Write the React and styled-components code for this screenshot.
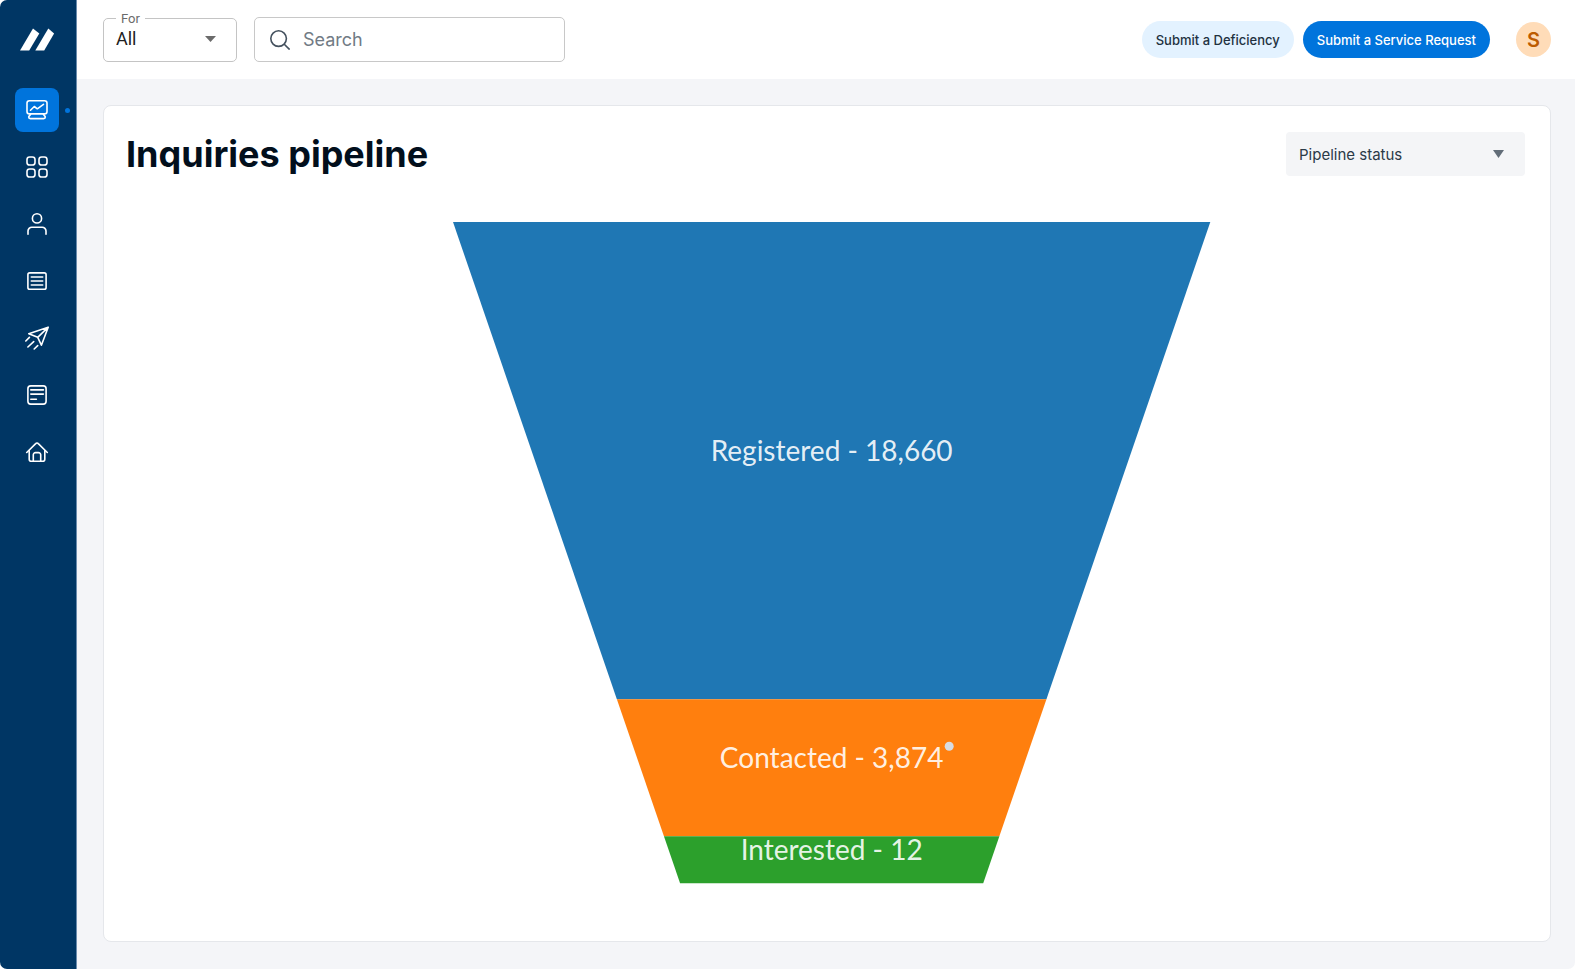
import React, { useState } from "react";
import styled, { createGlobalStyle } from "styled-components";

const GlobalStyle = createGlobalStyle`
  *,
  *::before,
  *::after {
    box-sizing: border-box;
  }

  body {
    margin: 0;
    background: #fff;
    font-family: Inter, "Liberation Sans", sans-serif;
    color: #2b3a47;
  }

  button,
  input,
  select {
    font: inherit;
  }
`;

const Layout = styled.div`
  display: flex;
  min-height: 100vh;
`;

const Sidebar = styled.aside`
  flex: none;
  width: 77px;
  padding: 28px 0 24px 15px;
  background: #003664;
  border-right: 1px solid #6a8bad;
  border-radius: 7px 0 0 7px;
`;

const LogoLink = styled.a`
  display: block;
  width: 44px;
  height: 60px;
`;

const NavList = styled.ul`
  display: flex;
  flex-direction: column;
  gap: 13px;
  margin: 0;
  padding: 0;
  list-style: none;
`;

const NavItem = styled.li`
  display: flex;
  align-items: center;
  gap: 6px;
`;

const NavLink = styled.a`
  display: flex;
  align-items: center;
  justify-content: center;
  width: 44px;
  height: 44px;
  border-radius: 8px;
  color: #fff;
  background: ${({ $active }) => ($active ? "#0074dc" : "transparent")};
`;

const ActiveDot = styled.span`
  width: 5px;
  height: 5px;
  border-radius: 50%;
  background: #0074dc;
`;

const Page = styled.div`
  display: flex;
  flex: 1;
  flex-direction: column;
  min-width: 0;
`;

const Header = styled.header`
  display: flex;
  align-items: center;
  justify-content: space-between;
  gap: 24px;
  height: 79px;
  padding: 0 24px 0 26px;
  background: #fff;
`;

const Filters = styled.div`
  display: flex;
  align-items: center;
  gap: 17px;
`;

const Outlined = styled.fieldset`
  width: 134px;
  height: 51px;
  margin: 0 0 6px;
  padding: 0;
  border: 1px solid #c4c4c4;
  border-radius: 5px;

  legend {
    margin-left: 12px;
    padding: 0 5px;
    font-family: Roboto, sans-serif;
    font-size: 13px;
    line-height: 15px;
    color: #6b6b6b;
  }
`;

const SelectWrap = styled.div`
  position: relative;
  display: flex;
  color: ${({ $arrowColor }) => $arrowColor};
`;

const PlainSelect = styled.select`
  width: 100%;
  height: 26px;
  padding: 0 12px;
  border: 0;
  background: transparent;
  appearance: none;
  font-family: Roboto, sans-serif;
  font-size: 18px;
  line-height: 24px;
  color: #212121;
`;

const FilledSelect = styled.select`
  width: 239px;
  height: 44px;
  padding: 0 13px;
  border: 0;
  border-radius: 4px;
  background: #f4f5f7;
  appearance: none;
  font-size: 15px;
  color: #2b3a47;
`;

const Arrow = styled.svg`
  position: absolute;
  top: 50%;
  right: ${({ $right }) => $right};
  width: 11px;
  height: ${({ $height }) => $height};
  transform: translateY(-50%);
  fill: currentColor;
  pointer-events: none;
`;

const SearchBox = styled.label`
  display: flex;
  align-items: center;
  gap: 13px;
  width: 311px;
  height: 45px;
  padding: 0 15px;
  border: 1px solid #c8c8c8;
  border-radius: 5px;
  color: #44515e;

  svg {
    flex: none;
  }

  input {
    flex: 1;
    min-width: 0;
    padding: 0;
    border: 0;
    outline: 0;
    background: transparent;
    font-size: 18px;
    color: #2b3a47;
  }

  input::placeholder {
    color: #717b85;
    opacity: 1;
  }
`;

const Actions = styled.div`
  display: flex;
  align-items: center;
  gap: 9px;
`;

const PillButton = styled.button`
  height: 37px;
  padding: 0 14px;
  border: 0;
  border-radius: 19px;
  font-size: 13px;
  font-weight: 500;
  white-space: nowrap;
  color: ${({ $primary }) => ($primary ? "#fff" : "#22313f")};
  background: ${({ $primary }) => ($primary ? "#0074dc" : "#e3f2ff")};
`;

const Avatar = styled.button`
  width: 35px;
  height: 35px;
  margin-left: 17px;
  padding: 0;
  border: 0;
  border-radius: 50%;
  background: #ffdcb8;
  font-size: 20px;
  font-weight: 600;
  color: #bd5b00;
`;

const Content = styled.main`
  display: flex;
  flex: 1;
  padding: 26px 24px 27px 26px;
  background: #f4f5f8;
  border-radius: 0 0 7px 0;
`;

const Card = styled.section`
  display: flex;
  flex: 1;
  flex-direction: column;
  min-width: 0;
  padding: 26px 25px 24px 22px;
  background: #fff;
  border: 1px solid #e5e7eb;
  border-radius: 8px;
`;

const CardHeader = styled.div`
  display: flex;
  align-items: center;
  justify-content: space-between;
`;

const Title = styled.h1`
  margin: 0;
  font-size: 36px;
  font-weight: 700;
  line-height: 44px;
  color: #020f1c;
`;

const ChartArea = styled.div`
  display: flex;
  justify-content: center;
  padding: 46px 0 0 12px;
`;

const Funnel = styled.svg`
  width: 54.6%;
  overflow: visible;

  text {
    font-family: Lato, sans-serif;
    font-size: 28px;
    text-anchor: middle;
    fill: #fff;
    fill-opacity: 0.9;
  }
`;

const NAV = [
  {
    label: "Dashboard",
    icon: (
      <>
        <rect x="2" y="2.7" width="20" height="13.2" rx="2.4" />
        <path d="M5.5 12.2l3.8-3.7 3 2.3 6.2-4.4" />
        <path d="M5.6 16.2c-.3 1-1.9 1.5-1.9 2.8 0 1 .6 1.6 1.6 1.6h13.4c1 0 1.6-.6 1.6-1.6 0-1.3-1.6-1.8-1.9-2.8" />
      </>
    ),
  },
  {
    label: "Apps",
    icon: (
      <>
        <rect x="2" y="2" width="8" height="8" rx="2.6" />
        <rect x="14" y="2" width="8" height="8" rx="2.6" />
        <rect x="2" y="14" width="8" height="8" rx="2.6" />
        <rect x="14" y="14" width="8" height="8" rx="2.6" />
      </>
    ),
  },
  {
    label: "Contacts",
    icon: (
      <>
        <circle cx="12" cy="6.4" r="4.6" />
        <path d="M3 22.3v-3.2a3.8 3.8 0 0 1 3.8-3.8h10.4a3.8 3.8 0 0 1 3.8 3.8v3.2" />
      </>
    ),
  },
  {
    label: "Lists",
    icon: (
      <>
        <rect x="2.9" y="3.9" width="18.2" height="16.4" rx="1.8" />
        <path d="M6.3 8h11.4M6.3 12h11.4M6.3 16h11.4" />
      </>
    ),
  },
  {
    label: "Campaigns",
    icon: (
      <>
        <path d="M23.2 1.2L3.8 7.7l8.9 3.6 3.7 7.9zM12.7 11.3L23.2 1.2" />
        <path d="M.8 15l3.6-3.6M2.9 21l5.8-5.4M9.2 23l3.5-3.4" />
      </>
    ),
  },
  {
    label: "Documents",
    icon: (
      <>
        <rect x="2.9" y="2.9" width="18.2" height="18.2" rx="2.8" />
        <path d="M5.8 6.9h12.6M5.8 11.1h12.6M5.8 16.3h5.6" />
      </>
    ),
  },
  {
    label: "Homes",
    icon: (
      <>
        <path d="M1.7 12.5L10.7 3.6a1.8 1.8 0 0 1 2.6 0l9 8.9" />
        <path d="M4.2 10.5v8.8a2 2 0 0 0 2 2h11.6a2 2 0 0 0 2-2v-8.8" />
        <path d="M8.3 21.2v-6.4a2.2 2.2 0 0 1 2.2-2.2h3a2.2 2.2 0 0 1 2.2 2.2v6.4" />
      </>
    ),
  },
];

const STAGES = [
  { name: "Registered", count: 18660, color: "#1f77b4", top: 0, bottom: 477, labelY: 239 },
  { name: "Contacted", count: 3874, color: "#ff7f0e", top: 477, bottom: 614, labelY: 546 },
  { name: "Interested", count: 12, color: "#2ca02c", top: 614, bottom: 661, labelY: 638 },
];

const FUNNEL_WIDTH = 757;
const FUNNEL_HEIGHT = 661;
const FUNNEL_INSET = 227;

// x of the left side of the funnel at a given height
const leftEdge = (y) => (y / FUNNEL_HEIGHT) * FUNNEL_INSET;

const stagePoints = ({ top, bottom }) =>
  [
    [leftEdge(top), top],
    [FUNNEL_WIDTH - leftEdge(top), top],
    [FUNNEL_WIDTH - leftEdge(bottom), bottom],
    [leftEdge(bottom), bottom],
  ].join(" ");

const App = () => {
  const [scope, setScope] = useState("All");
  const [search, setSearch] = useState("");
  const [metric, setMetric] = useState("Pipeline status");

  return (
    <Layout>
      <GlobalStyle />
      <Sidebar>
        <LogoLink href="#" aria-label="Home">
          <svg width="44" height="24" viewBox="0 0 44 24" fill="#fff">
            <path d="M5 22.6L18 .6l6.3 5L14.2 22.6z" />
            <path d="M20.3 22.6L33.3 .6l5.8 5L29.2 22.6z" />
          </svg>
        </LogoLink>
        <nav>
          <NavList>
            {NAV.map((item, index) => (
              <NavItem key={item.label}>
                <NavLink href="#" aria-label={item.label} $active={index === 0}>
                  <svg
                    width="24"
                    height="24"
                    viewBox="0 0 24 24"
                    fill="none"
                    stroke="currentColor"
                    strokeWidth="1.6"
                    strokeLinecap="round"
                    strokeLinejoin="round"
                  >
                    {item.icon}
                  </svg>
                </NavLink>
                {index === 0 && <ActiveDot />}
              </NavItem>
            ))}
          </NavList>
        </nav>
      </Sidebar>

      <Page>
        <Header>
          <Filters>
            <Outlined>
              <legend>
                <label htmlFor="scope">For</label>
              </legend>
              <SelectWrap $arrowColor="#6b6b6b">
                <PlainSelect
                  id="scope"
                  value={scope}
                  onChange={(e) => setScope(e.target.value)}
                >
                  <option>All</option>
                </PlainSelect>
                <Arrow $right="20px" $height="6px" viewBox="0 0 11 6">
                  <path d="M0 0h11L5.5 6z" />
                </Arrow>
              </SelectWrap>
            </Outlined>
            <SearchBox>
              <svg
                width="20"
                height="20"
                viewBox="0 0 20 20"
                fill="none"
                stroke="currentColor"
                strokeWidth="1.6"
              >
                <circle cx="8.6" cy="8.6" r="7.8" />
                <path d="M14 14l5.6 5.6" />
              </svg>
              <input
                type="text"
                placeholder="Search"
                aria-label="Search"
                value={search}
                onChange={(e) => setSearch(e.target.value)}
              />
            </SearchBox>
          </Filters>
          <Actions>
            <PillButton type="button">Submit a Deficiency</PillButton>
            <PillButton type="button" $primary>
              Submit a Service Request
            </PillButton>
            <Avatar type="button">S</Avatar>
          </Actions>
        </Header>

        <Content>
          <Card>
            <CardHeader>
              <Title>Inquiries pipeline</Title>
              <SelectWrap $arrowColor="#626d78">
                <FilledSelect
                  aria-label="Chart metric"
                  value={metric}
                  onChange={(e) => setMetric(e.target.value)}
                >
                  <option>Pipeline status</option>
                </FilledSelect>
                <Arrow $right="21px" $height="8px" viewBox="0 0 11 8">
                  <path d="M0 0h11L5.5 8z" />
                </Arrow>
              </SelectWrap>
            </CardHeader>
            <ChartArea>
              <Funnel viewBox={`0 0 ${FUNNEL_WIDTH} ${FUNNEL_HEIGHT}`}>
                {STAGES.map((stage) => (
                  <g key={stage.name}>
                    <polygon points={stagePoints(stage)} fill={stage.color} />
                    <text x={FUNNEL_WIDTH / 2} y={stage.labelY}>
                      {`${stage.name} - ${stage.count.toLocaleString("en-US")}`}
                    </text>
                  </g>
                ))}
                <circle cx="496" cy="524" r="4.5" fill="#d8dce2" />
              </Funnel>
            </ChartArea>
          </Card>
        </Content>
      </Page>
    </Layout>
  );
};

export default App;
